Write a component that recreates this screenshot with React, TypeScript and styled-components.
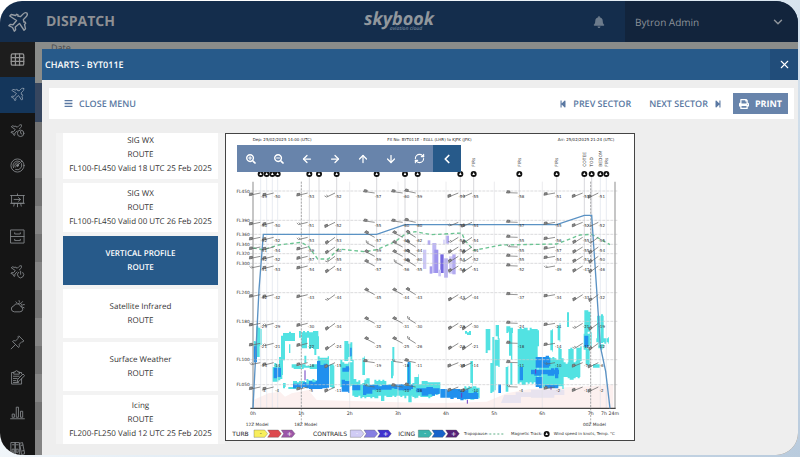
import React, { ReactNode, useState } from "react";
import styled, { createGlobalStyle, css } from "styled-components";
import {
  ArrowDown,
  ArrowLeft,
  ArrowRight,
  ArrowUp,
  ChevronDown,
  ChevronLeft,
  RefreshCw,
  X,
} from "lucide-react";
import { FaBars, FaBell, FaPrint, FaSearchMinus, FaSearchPlus, FaStepBackward, FaStepForward } from "react-icons/fa";

const GlobalStyle = createGlobalStyle`
  *, *::before, *::after { box-sizing: border-box; }
  body {
    margin: 0;
    font-family: "Open Sans", "Noto Sans", sans-serif;
    text-rendering: geometricPrecision;
    background: linear-gradient(135deg, #ffffff 20%, #dfeaf3 55%, #b9cbdd 100%);
  }
  button { font: inherit; text-rendering: inherit; border: 0; padding: 0; margin: 0; cursor: pointer; }
`;

/* ---------- page shell ---------- */

const Page = styled.div`
  height: 100vh;
  padding: 1px 2px 2px 0;
`;

const Shell = styled.div`
  height: 100%;
  display: flex;
  flex-direction: column;
  border-radius: 22px;
  overflow: hidden;
  background: #eeeeee;
`;

const Header = styled.header`
  flex: 0 0 41px;
  display: grid;
  grid-template-columns: 1fr auto 1fr;
  align-items: stretch;
  background: #142d4c;
  color: #959a9f;
`;

const HeaderStart = styled.div`
  display: flex;
  align-items: center;
  gap: 11px;
`;

const Brand = styled.a`
  width: 35px;
  display: grid;
  place-items: center;
  color: #959ca4;
`;

const PageTitle = styled.h1`
  margin: 0;
  font-size: 14px;
  line-height: 20px;
  font-weight: 700;
  color: #8e9094;
`;

const Wordmark = styled.div`
  display: flex;
  flex-direction: column;
  justify-content: center;
  align-items: center;
  font-style: italic;
  font-weight: 700;
  font-size: 18px;
  line-height: 19px;
  color: #91979d;
`;

const Tagline = styled.span`
  font-size: 5px;
  line-height: 7px;
  margin-top: -3px;
  font-weight: 600;
  padding-left: 14px;
  color: #6d8095;
`;

const HeaderEnd = styled.div`
  display: flex;
  justify-content: flex-end;
`;

const BellButton = styled.button`
  width: 52px;
  background: none;
  color: #6c7b8c;
  display: grid;
  place-items: center;
`;

const UserButton = styled.button`
  width: 173px;
  padding: 0 13px 0 10px;
  display: flex;
  align-items: center;
  justify-content: space-between;
  background: #12243c;
  color: #8c9299;
  font-size: 10px;
`;

const Body = styled.div`
  flex: 1;
  min-height: 0;
  display: flex;
`;

const Rail = styled.nav`
  flex: 0 0 35px;
  overflow: hidden;
  background: #151515;
`;

const RailList = styled.ul`
  margin: 0;
  padding: 0;
  list-style: none;
  height: 424px;
  display: flex;
  flex-direction: column;
`;

const RailItem = styled.li`
  flex: 1;
  display: grid;
`;

const RailLink = styled.a<{ $tone?: "lit" | "active" }>`
  display: grid;
  place-items: center;
  color: #85888b;
  ${(p) => p.$tone === "lit" && css`background: #1d1d1d; color: #949494;`}
  ${(p) => p.$tone === "active" && css`background: #14365b; color: #8b9cae;`}
`;

/* ---------- dimmed page behind the dialog ---------- */

const Main = styled.main`
  position: relative;
  flex: 1;
  min-width: 0;
  display: flex;
  padding: 7px 0 0 7px;
`;

const Behind = styled.div`
  position: absolute;
  inset: 0;
  overflow: hidden;
  background: #8a8c8a;
`;

const FieldLabel = styled.div`
  height: 41px;
  padding-left: 16px;
  font-size: 9px;
  line-height: 12px;
  color: #46484a;
`;

const BehindRow = styled.div<{ $kind: "head" | "odd" | "even" }>`
  height: ${(p) => (p.$kind === "head" ? 39 : 28)}px;
  background: ${(p) => ({ head: "#36465f", odd: "#737373", even: "#858585" })[p.$kind]};
`;

/* ---------- dialog ---------- */

const Dialog = styled.section`
  position: relative;
  flex: 1;
  min-width: 0;
  display: flex;
  flex-direction: column;
  background: #eeeeee;
`;

const DialogHeader = styled.div`
  flex: 0 0 31px;
  display: flex;
  justify-content: space-between;
  background: #275a8a;
  color: #ffffff;
`;

const DialogTitle = styled.h2`
  margin: 0;
  padding-left: 3px;
  font-size: 9px;
  line-height: 31px;
  font-weight: 600;
`;

const CloseButton = styled.button`
  width: 28px;
  background: #214d7a;
  color: #ffffff;
  display: grid;
  place-items: center;
`;

const ActionBar = styled.div`
  margin: 8px 4px 14px 7px;
  height: 31px;
  flex: none;
  padding: 0 6px 0 15px;
  display: flex;
  align-items: center;
  gap: 18px;
  background: #ffffff;
`;

const ActionButton = styled.button<{ $solid?: boolean; $push?: boolean }>`
  height: 21px;
  display: flex;
  align-items: center;
  gap: 6px;
  background: none;
  color: #5a78a2;
  font-size: 9px;
  font-weight: 600;
  white-space: nowrap;
  ${(p) => p.$push && css`margin-right: auto;`}
  ${(p) =>
    p.$solid &&
    css`
      margin-left: -7px;
      padding: 0 6px;
      background: #6884ab;
      color: #ffffff;
      font-weight: 700;
    `}
`;

const Workspace = styled.div`
  flex: 1;
  min-height: 0;
  display: flex;
  align-items: flex-start;
  padding-left: 14px;
`;

const ChartList = styled.div`
  flex: 0 0 169px;
  height: 311px;
  padding: 0 7px;
  display: flex;
  flex-direction: column;
  justify-content: flex-end;
  gap: 4px;
  overflow: hidden;
  background: #f3f3f3;
`;

const ChartOption = styled.button<{ $active: boolean }>`
  flex: 0 0 49px;
  display: flex;
  flex-direction: column;
  align-items: center;
  justify-content: center;
  font-size: 8px;
  line-height: 14px;
  white-space: nowrap;
  background: ${(p) => (p.$active ? "#275a8a" : "#ffffff")};
  color: ${(p) => (p.$active ? "#ffffff" : "#333333")};
  font-weight: ${(p) => (p.$active ? 600 : 400)};
`;

const ChartFrame = styled.figure`
  position: relative;
  flex: 0 1 410px;
  margin: 0;
  border: 1px solid #444444;
  background: #ffffff;
`;

const ChartSvg = styled.svg`
  display: block;
  width: 100%;
  height: auto;
  font-family: "DejaVu Sans", sans-serif;
`;

const ChartTools = styled.div`
  position: absolute;
  left: 11px;
  top: 11px;
  height: 27px;
  display: flex;
`;

const ToolButton = styled.button<{ $dark?: boolean }>`
  width: 28px;
  display: grid;
  place-items: center;
  color: #ffffff;
  background: ${(p) => (p.$dark ? "#275a8a" : "#6884ab")};
`;

/* ---------- icons ---------- */

const PLANE =
  "M21.8 2.2C20.5 1.4 18.6 2.2 17.4 3.4L14.6 6.2 11.8 5.5 12 4.3 10.6 3.6 9.4 4.9 4.6 3.8 3 5.4 10.4 10.4 6.6 15 3.4 14.6 2 16 6 18 8 22 9.4 20.6 9 17.4 13.6 13.6 18.6 21 20.2 19.4 19.1 14.6 20.4 13.4 19.7 12 18.5 12.2 17.8 9.4 20.6 6.6C21.8 5.4 22.6 3.5 21.8 2.2Z";

function Icon({ size = 16, weight = 1.4, children }: { size?: number; weight?: number; children: ReactNode }) {
  return (
    <svg
      width={size}
      height={size}
      viewBox="0 0 24 24"
      fill="none"
      stroke="currentColor"
      strokeWidth={weight}
      strokeLinejoin="round"
      strokeLinecap="round"
      aria-hidden="true"
    >
      {children}
    </svg>
  );
}

const railItems: { label: string; tone?: "lit" | "active"; art: ReactNode }[] = [
  {
    label: "Table",
    tone: "lit",
    art: (
      <g strokeWidth="2">
        <rect x="2" y="3" width="20" height="18" rx="2" />
        <path d="M2 9h20M2 15h20M8.7 3v18M15.3 3v18" />
      </g>
    ),
  },
  { label: "Dispatch", tone: "active", art: <path d={PLANE} /> },
  {
    label: "Flight times",
    art: (
      <>
        <path d="M18 3c-1-.6-2.600 0-3.500 1L12 6.500 9.500 6 9.300 4.800 8 5.500 3.500 4.500 2 6l6.500 4.500L5.500 14 2.500 13.700 1.500 15l3.500 1.500L6.500 20 8 18.700 7.700 16l3.600-3M14.800 9.500 17.500 7c1-1 1.400-2.800.500-4" />
        <circle cx="17" cy="16.500" r="5.200" />
        <path d="M17 13.500v3l2 1.200" />
      </>
    ),
  },
  {
    label: "Radar",
    art: (
      <>
        <circle cx="12" cy="12" r="10.500" />
        <path d="M12 12 19 5M5.500 15.500A7.500 7.500 0 0 1 15.500 5.500M8.200 14.500A4.600 4.600 0 0 1 14 8M18.500 9a7.500 7.500 0 0 1-9.500 9.500" />
        <circle cx="12" cy="12" r="1.600" fill="currentColor" />
      </>
    ),
  },
  {
    label: "Briefing board",
    art: (
      <>
        <path d="M1 4h22M2.500 4v12.500h19V4M1 16.500h22M12 1.500V4M12 16.500V22M7 16.500 6 21M17 16.500l1 4.500M6.500 10.300h10M13.500 7.300l3.200 3-3.200 3" />
      </>
    ),
  },
  {
    label: "Archive",
    art: (
      <>
        <rect x="1.500" y="1.500" width="21" height="21" />
        <path d="M1.500 12h21M7.500 6v2h9V6M7.500 16.500v2h9v-2" />
      </>
    ),
  },
  {
    label: "Flight status",
    art: (
      <>
        <path d="M18 3c-1-.6-2.600 0-3.500 1L12 6.500 9.500 6 9.300 4.800 8 5.500 3.500 4.500 2 6l6.500 4.500L5.500 14 2.500 13.700 1.500 15l3.500 1.500L6.500 20 8 18.700 7.700 16l3.600-3M14.800 9.500 17.500 7c1-1 1.400-2.800.500-4" />
        <path d="M14 13a5 5 0 1 0 6.500.5M17 11.500v5" />
      </>
    ),
  },
  {
    label: "Weather",
    art: (
      <>
        <path d="M6.500 20.500a4.700 4.700 0 0 1-.5-9.300 5.800 5.800 0 0 1 11 .800 4.300 4.300 0 0 1-.5 8.500z" />
        <path d="M12.500 7.700a4 4 0 0 1 6.300 4.800M14.500 2.500l.5 2M20 4.200l-1.500 1.700M23 9h-2.200M22.500 14l-1.800-.800M9.500 4.500 11 6" />
      </>
    ),
  },
  {
    label: "Pins",
    art: <path d="M14.500 1.800 22.200 9.500 20.500 11 19 10.600 14.700 15c.6 2 .2 3.600-1 5L4 10.300c1.500-1.300 3.100-1.600 5-1L13.400 5 13 3.300zM8.700 15.300 1.800 22.200" />,
  },
  {
    label: "Reports",
    art: (
      <>
        <path d="M18.500 14v8.500h-16V4H6M14.500 4h4v2M6 6V3h2.500a2 2 0 0 1 4 0H15v3zM5.500 10h9M5.500 13.500h6M5.500 17h4M5.500 20h8" />
        <path d="M11.500 18.500l1-3.800L20.800 6.400l2.600 2.600-8.200 8.300z" />
      </>
    ),
  },
  {
    label: "Statistics",
    art: (
      <>
        <path d="M1 22h22" />
        <path d="M3.500 19v-4.500h3.500V19zM10 19V3.500h3.500V19zM16.800 19V10h3.500v9z" />
      </>
    ),
  },
  {
    label: "Library",
    art: (
      <>
        <path d="M2 2.500h6.500v19H2zM8.500 2.500H15v19H8.500zM16 3.500l4-1 3.500 18-4.500 1z" />
        <path d="M4 6h2.500M10.500 6H13M4 13h2.500v5H4zM10.500 13H13v5h-2.500zM18 7l2.500-.5M19 16l3-.6" />
      </>
    ),
  },
];

/* ---------- vertical profile drawing (1230 x 924 canvas) ---------- */

type Box = [number, number, number, number];

const levels: [string, number][] = [
  ["FL450", 174],
  ["FL390", 262],
  ["FL360", 304],
  ["FL340", 334],
  ["FL320", 362],
  ["FL300", 391],
  ["FL240", 479],
  ["FL180", 565],
  ["FL100", 680],
  ["FL050", 755],
];

const hours: [string, number][] = [
  ["0h", 84],
  ["1h", 229],
  ["2h", 374],
  ["3h", 519],
  ["4h", 663],
  ["5h", 808],
  ["6h", 952],
  ["7h", 1097],
  ["7h 24m", 1155],
];

const waypoints = [107, 125, 142, 158, 253, 282, 335, 455, 540, 578, 706, 746, 883, 995, 1078, 1100, 1126, 1144];

const waypointNames: [string, number][] = [
  ["FIRs", 746],
  ["FIRs", 883],
  ["FIRs", 995],
  ["COTEE", 1078],
  ["TOD", 1100],
  ["BEDOM", 1126],
  ["FIRs", 1144],
];

/* x position, then barb slope in degrees */
const windColumns: [number, number][] = [
  [116, -12],
  [156, -14],
  [258, -14],
  [340, -26],
  [459, 8],
  [543, 8],
  [582, 12],
  [710, -22],
  [751, -24],
  [888, 2],
  [1000, -10],
  [1083, -22],
  [1130, -26],
];

const windRows: [number, string[]][] = [
  [181, ["49", "50", "53", "52", "57", "60", "59", "53", "55", "58", "51", "51", "51"]],
  [269, ["50", "50", "51", "52", "55", "60", "60", "55", "54", "57", "55", "52", "52"]],
  [314, ["52", "52", "53", "53", "57", "61", "62", "56", "54", "55", "56", "55", "55"]],
  [343, ["51", "54", "59", "60", "59", "63", "64", "56", "54", "55", "57", "55", "54"]],
  [371, ["52", "52", "57", "55", "59", "60", "60", "54", "52", "55", "54", "51", "50"]],
  [400, ["51", "53", "54", "54", "57", "56", "55", "54", "51", "52", "49", "47", "46"]],
  [486, ["42", "42", "43", "44", "45", "44", "43", "43", "44", "37", "34", "33", "32"]],
  [572, ["29", "29", "30", "34", "32", "31", "30", "29", "30", "24", "21", "21", "19"]],
  [632, ["21", "21", "22", "24", "25", "25", "26", "20", "21", "18", "14", "12", "12"]],
  [690, ["13", "14", "16", "15", "19", "18", "11", "14", "14", "11", "10", "7", "6"]],
  [763, ["3", "4", "5", "11", "10", "10", "16", "11", "10", "4", "2", "1", "2"]],
];

const cyanRegions: Box[] = [
  [94, 580, 16, 64],
  [86, 620, 18, 60],
  [168, 600, 12, 90],
  [174, 596, 36, 32],
  [162, 660, 12, 70],
  [142, 690, 30, 60],
  [222, 594, 58, 20],
  [228, 606, 18, 44],
  [252, 606, 30, 46],
  [192, 630, 4, 34],
  [268, 640, 6, 30],
  [200, 694, 92, 14],
  [238, 668, 6, 26],
  [174, 750, 8, 16],
  [190, 762, 30, 6],
  [204, 744, 80, 20],
  [244, 738, 66, 20],
  [278, 666, 34, 70],
  [314, 690, 14, 80],
  [346, 680, 40, 90],
  [358, 624, 24, 60],
  [382, 734, 24, 62],
  [412, 670, 8, 60],
  [394, 750, 236, 46],
  [418, 736, 16, 20],
  [448, 740, 36, 20],
  [502, 634, 6, 60],
  [498, 676, 8, 60],
  [546, 680, 12, 90],
  [568, 724, 14, 70],
  [590, 740, 56, 46],
  [468, 784, 10, 24],
  [550, 782, 10, 26],
  [720, 594, 18, 12],
  [736, 672, 8, 90],
  [718, 760, 46, 40],
  [782, 580, 14, 84],
  [812, 568, 10, 50],
  [802, 612, 22, 90],
  [796, 690, 16, 90],
  [844, 580, 20, 20],
  [852, 590, 10, 90],
  [842, 690, 8, 90],
  [856, 690, 6, 70],
  [878, 580, 60, 180],
  [930, 580, 12, 60],
  [976, 580, 8, 80],
  [998, 570, 8, 60],
  [1026, 538, 6, 44],
  [1000, 640, 10, 50],
  [940, 668, 76, 100],
  [1010, 684, 56, 56],
  [1030, 644, 16, 50],
  [1054, 636, 16, 60],
  [1078, 524, 20, 80],
  [1076, 590, 24, 60],
  [1082, 640, 12, 62],
  [1116, 540, 20, 90],
  [1114, 612, 38, 20],
  [1120, 630, 16, 20],
  [1104, 694, 20, 10],
];

const blueRegions: Box[] = [
  [86, 640, 10, 60],
  [146, 700, 22, 36],
  [204, 748, 66, 18],
  [276, 684, 36, 90],
  [252, 744, 60, 24],
  [350, 740, 24, 40],
  [352, 700, 22, 16],
  [374, 640, 6, 30],
  [382, 756, 24, 16],
  [414, 752, 28, 34],
  [440, 756, 70, 14],
  [508, 754, 56, 18],
  [548, 686, 6, 80],
  [574, 762, 70, 20],
  [590, 768, 52, 20],
  [646, 768, 84, 30],
  [696, 776, 64, 26],
  [820, 754, 8, 30],
  [884, 690, 10, 60],
  [932, 668, 44, 40],
  [918, 706, 84, 22],
  [932, 724, 20, 42],
  [990, 700, 10, 40],
  [960, 756, 40, 10],
  [1078, 600, 12, 50],
];

const contrailRegions: [Box, string][] = [
  [[594, 350, 10, 58], "#cdc8f6"],
  [[608, 322, 8, 14], "#b3abf0"],
  [[614, 400, 8, 22], "#a49bee"],
  [[622, 330, 12, 90], "#bdb6f3"],
  [[628, 350, 12, 70], "#9d93ec"],
  [[646, 364, 10, 56], "#7467e0"],
  [[658, 376, 10, 58], "#a49bee"],
  [[662, 308, 10, 24], "#b3abf0"],
  [[654, 320, 8, 14], "#dedbfa"],
  [[672, 370, 12, 52], "#d2cdf7"],
  [[682, 364, 10, 60], "#b3abf0"],
  [[640, 410, 8, 20], "#cdc8f6"],
];

/* Splits a region into narrow columns with uneven tops and bottoms. */
function columnsOf(regions: Box[], step: number): string {
  let seed = 7;
  const rand = () => {
    seed = (seed * 16807) % 2147483647;
    return seed / 2147483647;
  };
  let d = "";
  regions.forEach(([x, y, w, h]) => {
    for (let cx = x; cx < x + w; cx += step) {
      const cw = Math.min(step, x + w - cx);
      const reach = Math.min(12, h * 0.2);
      const top = y + Math.round((rand() * reach) / 4) * 4;
      const bottom = y + h - Math.round((rand() * reach) / 4) * 4;
      d += `M${cx} ${top}h${cw}V${bottom}h${-cw}z`;
    }
  });
  return d;
}

function Barb({ x, y, angle, heavy }: { x: number; y: number; angle: number; heavy: boolean }) {
  return (
    <g transform={`translate(${x - 10} ${y - 1}) rotate(${angle})`}>
      <path d="M0 0H-28M-28 0l-4-6M-23 0l-3-6" />
      {heavy && <path d="M-34 1l3-7 8 1-2 6z" fill="#888" />}
    </g>
  );
}

function Legend({ x, colors, label, labelX }: { x: number; colors: string[]; label: string; labelX: number }) {
  return (
    <g>
      <text x={labelX} y="908" fontSize="18" fill="#222">
        {label}
      </text>
      {colors.map((c, i) => (
        <path key={c} d={`M${x + i * 41} 891h32l9 11-9 11h-32l${i ? 7 : 0}-11z`} fill={c} stroke="#555" strokeWidth="1" />
      ))}
      <text x={x + 17} y="907" fontSize="16" fill={x < 200 ? "#333" : "#fff"}>
        -
      </text>
      <text x={x + 98} y="909" fontSize="19" fill="#fff">
        +
      </text>
    </g>
  );
}

function VerticalProfile() {
  return (
    <ChartSvg viewBox="3 3 1224 918" role="img" aria-label="Vertical profile, EGLL to KJFK">
      <g fill="#222" fontSize="12">
        <text x="83" y="24">Dep: 25/02/2025 14:00 (UTC)</text>
        <text x="487" y="24">Flt No: BYT011E - EGLL (LHR) to KJFK (JFK)</text>
        <text x="998" y="24">Arr: 25/02/2025 21:24 (UTC)</text>
      </g>

      <path
        d="M85 826V801L130 781 165 776 180 791 200 781 250 771 275 801 630 811 785 806 845 781 915 768 1165 756V826z"
        fill="#fcf0ef"
      />
      <path d={columnsOf(cyanRegions, 6)} fill="#52e2e2" />
      <path d={columnsOf(blueRegions, 10)} fill="#2090ee" />
      <path d="M838 786h34v-8h46v14h-30v18h-60zM918 770h100v16h-30v8h-70z" fill="#b9c8ee" opacity="0.3" />
      <path d="M240 712v30M932 708v14M710 780v14M727 800v12M978 760v10" stroke="#6a3bc0" strokeWidth="3" />
      {contrailRegions.map(([[x, y, w, h], fill]) => (
        <rect key={`${x}-${y}`} x={x} y={y} width={w} height={h} fill={fill} />
      ))}

      <g stroke="#c8c8cc" strokeWidth="2">
        {levels.map(([name, y]) => (
          <path key={name} d={`M76 ${y}H1178`} strokeDasharray="9 3" />
        ))}
        {hours.slice(1, 8).map(([name, x]) => (
          <path key={name} d={`M${x} 146V826`} stroke="#e2e2e6" />
        ))}
        {waypoints.map((x, i) => (
          <path key={x} d={`M${x} 132V${i > 3 && i < 16 ? 390 : 826}`} stroke={i > 3 && i < 16 ? "#c6c6cc" : "#dde2ec"} />
        ))}
      </g>
      <path d="M229 146V870M1097 146V870" stroke="#888" strokeWidth="2" strokeDasharray="6 4" />
      <path d="M84 146V826M1170 146V826" stroke="#aaa" strokeWidth="4" />
      <path d="M76 826H1172" stroke="#444" strokeWidth="4" />

      <g fill="#333" fontSize="13">
        {levels.map(([name, y]) => (
          <text key={name} x="74" y={y + 5} textAnchor="end">
            {name}
          </text>
        ))}
        {hours.map(([name, x]) => (
          <text key={name} x={x} y="847" textAnchor="middle" fontSize="14">
            {name}
          </text>
        ))}
        <text x="62" y="878">12Z Model</text>
        <text x="208" y="878">18Z Model</text>
        <text x="1074" y="878">00Z Model</text>
      </g>

      <path
        d="M84 345 115 350 160 336 229 328 250 340 278 378 310 378 340 348 420 356 455 350 510 326 540 304 570 296 620 305 710 300 720 322 746 352 830 336 995 333 1065 306 1100 304 1155 335"
        fill="none"
        stroke="#6cc493"
        strokeWidth="4"
        strokeDasharray="11 8"
      />
      <path
        d="M84 826 102 470 115 304H455L540 275H995L1078 247H1100L1115 470 1126 640 1142 715 1155 826"
        fill="none"
        stroke="#5a92c4"
        strokeWidth="4"
      />

      <g stroke="#666" strokeWidth="2" fill="none">
        {windRows.map(([y]) =>
          windColumns.map(([x, angle], c) => (
            <Barb
              key={`${x}-${y}`}
              x={x}
              y={y}
              angle={angle + (y > 290 && y < 660 ? (angle > 5 ? 20 : angle < -15 ? -10 : 0) : 0)}
              heavy={(c * 3 + y) % 5 !== 0}
            />
          )),
        )}
      </g>
      <g fill="#333" fontSize="12" textAnchor="middle">
        {windRows.map(([y, temps]) =>
          temps.map((t, c) => (
            <text key={`${y}-${c}`} x={windColumns[c][0]} y={y + 13}>
              -{t}
            </text>
          )),
        )}
      </g>

      {waypoints.map((x) => (
        <g key={x}>
          <circle cx={x} cy="123" r="9" fill="#111" />
          <path d={`M${x} 118l4 8h-8z`} fill="#fff" />
        </g>
      ))}
      <g fill="#333" fontSize="13">
        {waypointNames.map(([name, x]) => (
          <text key={x} transform={`translate(${x + 5} 101) rotate(-90)`}>
            {name}
          </text>
        ))}
      </g>

      <Legend labelX={22} label="TURB" x={87} colors={["#f8ee5c", "#dd4a4f", "#9c56a8"]} />
      <Legend labelX={264} label="CONTRAILS" x={376} colors={["#d0ccf5", "#867fe2", "#3f32cf"]} />
      <Legend labelX={520} label="ICING" x={580} colors={["#3cb3ac", "#1762c9", "#542278"]} />
      <g fill="#333" fontSize="12">
        <text x="717" y="907">Tropopause:</text>
        <path d="M793 903h42" stroke="#5fae86" strokeWidth="3" strokeDasharray="6 6" />
        <text x="858" y="907">Magnetic Track:</text>
        <circle cx="965" cy="903" r="9" fill="#111" />
        <path d="M965 898l4 8h-8z" fill="#fff" />
        <text x="986" y="907">Wind speed in knots, Temp. °C</text>
      </g>
    </ChartSvg>
  );
}

/* ---------- data for the list ---------- */

const charts = [
  ["SIG WX", "ROUTE", "FL100-FL450 Valid 18 UTC 25 Feb 2025"],
  ["SIG WX", "ROUTE", "FL100-FL450 Valid 00 UTC 26 Feb 2025"],
  ["VERTICAL PROFILE", "ROUTE"],
  ["Satellite Infrared", "ROUTE"],
  ["Surface Weather", "ROUTE"],
  ["Icing", "ROUTE", "FL200-FL250 Valid 12 UTC 25 Feb 2025"],
];

const tools: { label: string; icon: ReactNode; dark?: boolean }[] = [
  { label: "Zoom in", icon: <FaSearchPlus size={10} /> },
  { label: "Zoom out", icon: <FaSearchMinus size={10} /> },
  { label: "Pan left", icon: <ArrowLeft size={12} strokeWidth={2.5} /> },
  { label: "Pan right", icon: <ArrowRight size={12} strokeWidth={2.5} /> },
  { label: "Pan up", icon: <ArrowUp size={12} strokeWidth={2.5} /> },
  { label: "Pan down", icon: <ArrowDown size={12} strokeWidth={2.5} /> },
  { label: "Reset", icon: <RefreshCw size={11} strokeWidth={2.5} /> },
  { label: "Collapse tools", icon: <ChevronLeft size={14} strokeWidth={3} />, dark: true },
];

export default function App() {
  const [selected, setSelected] = useState(2);
  return (
    <>
      <GlobalStyle />
      <Page>
        <Shell>
          <Header>
            <HeaderStart>
              <Brand href="#home" aria-label="Home">
                <Icon size={22} weight={1.5}>
                  <path d={PLANE} />
                </Icon>
              </Brand>
              <PageTitle>DISPATCH</PageTitle>
            </HeaderStart>
            <Wordmark>
              <span>skybook</span>
              <Tagline>aviation cloud</Tagline>
            </Wordmark>
            <HeaderEnd>
              <BellButton aria-label="Notifications">
                <FaBell size={12} />
              </BellButton>
              <UserButton>
                Bytron Admin
                <ChevronDown size={14} strokeWidth={2.5} />
              </UserButton>
            </HeaderEnd>
          </Header>
          <Body>
            <Rail aria-label="Sections">
              <RailList>
                {railItems.map((item) => (
                  <RailItem key={item.label}>
                    <RailLink href="#section" $tone={item.tone} aria-label={item.label}>
                      <Icon size={15}>{item.art}</Icon>
                    </RailLink>
                  </RailItem>
                ))}
              </RailList>
            </Rail>
            <Main>
              <Behind aria-hidden="true">
                <FieldLabel>Date</FieldLabel>
                <BehindRow $kind="head" />
                {Array.from({ length: 12 }, (_, i) => (
                  <BehindRow key={i} $kind={i % 2 ? "even" : "odd"} />
                ))}
              </Behind>
              <Dialog role="dialog" aria-label="Charts">
                <DialogHeader>
                  <DialogTitle>CHARTS - BYT011E</DialogTitle>
                  <CloseButton aria-label="Close">
                    <X size={13} strokeWidth={2} />
                  </CloseButton>
                </DialogHeader>
                <ActionBar>
                  <ActionButton $push>
                    <FaBars size={9} />
                    CLOSE MENU
                  </ActionButton>
                  <ActionButton>
                    <FaStepBackward size={8} />
                    PREV SECTOR
                  </ActionButton>
                  <ActionButton>
                    NEXT SECTOR
                    <FaStepForward size={8} />
                  </ActionButton>
                  <ActionButton $solid>
                    <FaPrint size={10} />
                    PRINT
                  </ActionButton>
                </ActionBar>
                <Workspace>
                  <ChartList>
                    {charts.map((lines, i) => (
                      <ChartOption key={i} $active={i === selected} onClick={() => setSelected(i)}>
                        {lines.map((line) => (
                          <span key={line}>{line}</span>
                        ))}
                      </ChartOption>
                    ))}
                  </ChartList>
                  <ChartFrame>
                    <VerticalProfile />
                    <ChartTools role="toolbar" aria-label="Chart tools">
                      {tools.map((t) => (
                        <ToolButton key={t.label} aria-label={t.label} $dark={t.dark}>
                          {t.icon}
                        </ToolButton>
                      ))}
                    </ChartTools>
                  </ChartFrame>
                </Workspace>
              </Dialog>
            </Main>
          </Body>
        </Shell>
      </Page>
    </>
  );
}
